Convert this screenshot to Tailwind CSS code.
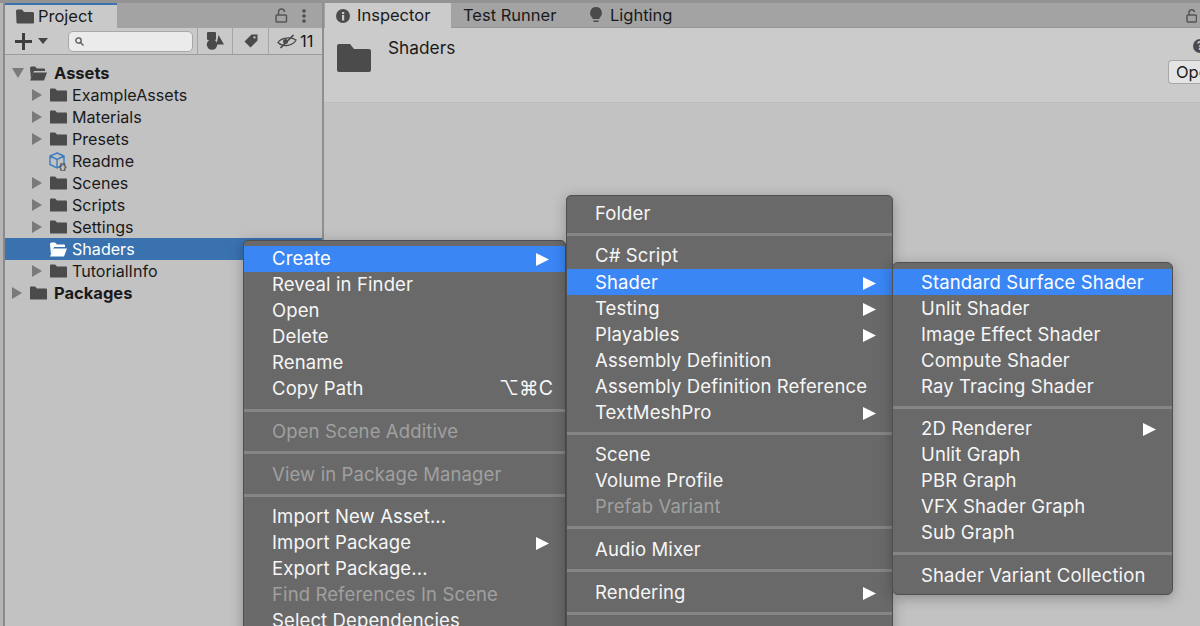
<!DOCTYPE html>
<html>
<head>
<meta charset="utf-8">
<script src="https://cdn.jsdelivr.net/npm/@tailwindcss/browser@4"></script>
</head>
<body class="m-0">
<div class="relative w-[1200px] h-[626px] overflow-hidden flex bg-[#939393] pt-[3px] font-['Inter','Liberation_Sans',sans-serif] text-[16.1px] text-[#1a1a1a]">

  <div class="w-[3px] shrink-0 bg-[#b4b4b4]"></div>
  <div class="w-[2px] shrink-0 bg-[#8a8a8a]"></div>

  <!-- Project panel -->
  <div class="w-[319px] shrink-0 flex flex-col">
    <div class="flex flex-col h-full border-r-2 border-[#8f8f8f] bg-[#c2c2c2]">
      <div class="h-[25px] flex bg-[#a3a3a3]">
        <div class="w-[112px] border-t-2 border-[#3a72b0] bg-[#c9c9c9] flex items-center pl-[11px] gap-[4px]">
          <svg class="w-[18px] h-[15px]" viewBox="0 0 18 15"><path d="M0 2a1.5 1.5 0 0 1 1.5-1.5h4.500l2 2.500h8.500a1.500 1.500 0 0 1 1.500 1.500v9a1 1 0 0 1-1 1h-15.500a1 1 0 0 1-1-1z" fill="#4b4b4b"/></svg>
          <span class="text-[16.5px] leading-none">Project</span>
        </div>
        <div class="flex-1 flex items-center justify-end gap-[14px] pr-[16px]">
          <svg class="w-[13px] h-[15px]" viewBox="0 0 13 15" fill="none" stroke="#555" stroke-width="1.500"><rect x="1" y="7" width="10.500" height="7" rx="1"/><path d="M3.500 7V4a3 3 0 0 1 6 0"/></svg>
          <svg class="w-[4px] h-[14px]" viewBox="0 0 4 14" fill="#4d4d4d"><circle cx="2" cy="2" r="1.800"/><circle cx="2" cy="7" r="1.800"/><circle cx="2" cy="12" r="1.800"/></svg>
        </div>
      </div>
      <div class="h-[27px] flex items-center bg-[#c9c9c9] border-b border-[#9a9a9a]">
        <svg class="ml-[10px] w-[17px] h-[17px]" viewBox="0 0 17 17" fill="#3d3d3d"><rect x="7" y="0" width="3" height="17"/><rect x="0" y="7" width="17" height="3"/></svg>
        <svg class="ml-[6px] w-[10px] h-[6px]" viewBox="0 0 10 6" fill="#444"><polygon points="0,0 10,0 5,6"/></svg>
        <div class="ml-[20px] w-[125px] h-[21px] rounded-[5px] bg-[#ebebeb] border border-[#a8a8a8] flex items-center pl-[6px]">
          <svg class="w-[9px] h-[9px]" viewBox="0 0 9 9" fill="none" stroke="#555" stroke-width="1.300"><circle cx="3.500" cy="3.500" r="2.700"/><path d="M5.500 5.500L8.500 8.500"/></svg>
        </div>
        <div class="ml-[4px] w-[35px] h-full border-l border-[#a5a5a5] flex items-center justify-center">
          <svg class="w-[18px] h-[18px]" viewBox="0 0 18 18" fill="#4a4a4a"><rect x="1" y="0" width="9" height="8" rx="1"/><circle cx="6" cy="12.500" r="5.200"/><polygon points="12.500,3 18,12.500 10.500,12.500"/></svg>
        </div>
        <div class="w-[36px] h-full border-l border-[#a5a5a5] flex items-center justify-center">
          <svg class="w-[14px] h-[14px]" viewBox="0 0 14 14" fill="#4a4a4a"><path d="M7.500 0.500h6v6l-7 7-6-6zM10.500 2.300a1.100 1.100 0 1 0 .01 0z" fill-rule="evenodd"/></svg>
        </div>
        <div class="w-[49px] h-full border-l border-[#a5a5a5] flex items-center pl-[8px] gap-[3px]">
          <svg class="w-[20px] h-[15px]" viewBox="0 0 20 15" fill="none" stroke="#4a4a4a" stroke-width="1.300"><path d="M1 8.500c3-5 13-6 18-2.500-3 6-13 7.500-18 2.500z"/><path d="M3.500 14L16.500 1" stroke-width="1.700"/><circle cx="8.500" cy="7.500" r="2.500" fill="#4a4a4a" stroke="none"/></svg>
          <span class="text-[16.5px] leading-none">11</span>
        </div>
      </div>
      <div class="flex-1 pt-[7px] flex flex-col">
        <div class="h-[22px] flex items-center pl-[7px]">
          <svg class="w-[12px] h-[10px]" viewBox="0 0 12 10" fill="#7a7a7a"><polygon points="0,0 12,0 6,10"/></svg>
          <svg class="ml-[6px] w-[17px] h-[15px]" viewBox="0 0 17 15"><path d="M0 2a1.500 1.500 0 0 1 1.500-1.500h3.500l2 2h7a1 1 0 0 1 1 1v1.500h-11l-3 8z" fill="#4b4b4b"/><path d="M3.500 6.500h13.500l-3 8h-14z" fill="#4b4b4b"/></svg>
          <span class="ml-[7px] font-bold text-[16.5px]">Assets</span>
        </div>
        <div class="h-[22px] flex items-center pl-[27px]">
          <svg class="w-[10px] h-[12px]" viewBox="0 0 10 12" fill="#7a7a7a"><polygon points="0,0 10,6 0,12"/></svg>
          <svg class="ml-[8px] w-[17px] h-[14px]" viewBox="0 0 17 14" fill="#4b4b4b"><path d="M0 1.500a1 1 0 0 1 1-1h4l2 2h9a1 1 0 0 1 1 1v9.500a.5.5 0 0 1-.5.5h-16a.5.5 0 0 1-.5-.5z"/></svg>
          <span class="ml-[5px]">ExampleAssets</span>
        </div>
        <div class="h-[22px] flex items-center pl-[27px]">
          <svg class="w-[10px] h-[12px]" viewBox="0 0 10 12" fill="#7a7a7a"><polygon points="0,0 10,6 0,12"/></svg>
          <svg class="ml-[8px] w-[17px] h-[14px]" viewBox="0 0 17 14" fill="#4b4b4b"><path d="M0 1.500a1 1 0 0 1 1-1h4l2 2h9a1 1 0 0 1 1 1v9.500a.5.5 0 0 1-.5.5h-16a.5.5 0 0 1-.5-.5z"/></svg>
          <span class="ml-[5px]">Materials</span>
        </div>
        <div class="h-[22px] flex items-center pl-[27px]">
          <svg class="w-[10px] h-[12px]" viewBox="0 0 10 12" fill="#7a7a7a"><polygon points="0,0 10,6 0,12"/></svg>
          <svg class="ml-[8px] w-[17px] h-[14px]" viewBox="0 0 17 14" fill="#4b4b4b"><path d="M0 1.500a1 1 0 0 1 1-1h4l2 2h9a1 1 0 0 1 1 1v9.500a.5.5 0 0 1-.5.5h-16a.5.5 0 0 1-.5-.5z"/></svg>
          <span class="ml-[5px]">Presets</span>
        </div>
        <div class="h-[22px] flex items-center pl-[44px]">
          <svg class="w-[20px] h-[19px]" viewBox="0 0 20 19" fill="none"><path d="M8 1l7 3v8l-7 4-7-3.500V4zM1 4l7 3.500L15 4M8 7.500V16" stroke="#3a7cc0" stroke-width="1.400"/><text x="9.500" y="18" font-size="9" font-family="Inter" font-weight="700" fill="#555">{}</text></svg>
          <span class="ml-[3px]">Readme</span>
        </div>
        <div class="h-[22px] flex items-center pl-[27px]">
          <svg class="w-[10px] h-[12px]" viewBox="0 0 10 12" fill="#7a7a7a"><polygon points="0,0 10,6 0,12"/></svg>
          <svg class="ml-[8px] w-[17px] h-[14px]" viewBox="0 0 17 14" fill="#4b4b4b"><path d="M0 1.500a1 1 0 0 1 1-1h4l2 2h9a1 1 0 0 1 1 1v9.500a.5.5 0 0 1-.5.5h-16a.5.5 0 0 1-.5-.5z"/></svg>
          <span class="ml-[5px]">Scenes</span>
        </div>
        <div class="h-[22px] flex items-center pl-[27px]">
          <svg class="w-[10px] h-[12px]" viewBox="0 0 10 12" fill="#7a7a7a"><polygon points="0,0 10,6 0,12"/></svg>
          <svg class="ml-[8px] w-[17px] h-[14px]" viewBox="0 0 17 14" fill="#4b4b4b"><path d="M0 1.500a1 1 0 0 1 1-1h4l2 2h9a1 1 0 0 1 1 1v9.500a.5.5 0 0 1-.5.5h-16a.5.5 0 0 1-.5-.5z"/></svg>
          <span class="ml-[5px]">Scripts</span>
        </div>
        <div class="h-[22px] flex items-center pl-[27px]">
          <svg class="w-[10px] h-[12px]" viewBox="0 0 10 12" fill="#7a7a7a"><polygon points="0,0 10,6 0,12"/></svg>
          <svg class="ml-[8px] w-[17px] h-[14px]" viewBox="0 0 17 14" fill="#4b4b4b"><path d="M0 1.500a1 1 0 0 1 1-1h4l2 2h9a1 1 0 0 1 1 1v9.500a.5.5 0 0 1-.5.5h-16a.5.5 0 0 1-.5-.5z"/></svg>
          <span class="ml-[5px]">Settings</span>
        </div>
        <div class="h-[22px] flex items-center pl-[45px] bg-[#3a72b0] text-white">
          <svg class="w-[17px] h-[15px]" viewBox="0 0 17 15"><path d="M0 2a1.500 1.500 0 0 1 1.500-1.500h3.500l2 2h7a1 1 0 0 1 1 1v1.500h-11l-3 8z" fill="#fff"/><path d="M3.500 6.500h13.500l-3 8h-14z" fill="#fff"/></svg>
          <span class="ml-[5px]">Shaders</span>
        </div>
        <div class="h-[22px] flex items-center pl-[27px]">
          <svg class="w-[10px] h-[12px]" viewBox="0 0 10 12" fill="#7a7a7a"><polygon points="0,0 10,6 0,12"/></svg>
          <svg class="ml-[8px] w-[17px] h-[14px]" viewBox="0 0 17 14" fill="#4b4b4b"><path d="M0 1.500a1 1 0 0 1 1-1h4l2 2h9a1 1 0 0 1 1 1v9.500a.5.5 0 0 1-.5.5h-16a.5.5 0 0 1-.5-.5z"/></svg>
          <span class="ml-[5px]">TutorialInfo</span>
        </div>
        <div class="h-[22px] flex items-center pl-[7px]">
          <svg class="w-[10px] h-[12px]" viewBox="0 0 10 12" fill="#7a7a7a"><polygon points="0,0 10,6 0,12"/></svg>
          <svg class="ml-[8px] w-[17px] h-[14px]" viewBox="0 0 17 14" fill="#4b4b4b"><path d="M0 1.500a1 1 0 0 1 1-1h4l2 2h9a1 1 0 0 1 1 1v9.500a.5.5 0 0 1-.5.5h-16a.5.5 0 0 1-.5-.5z"/></svg>
          <span class="ml-[7px] font-bold text-[16.5px]">Packages</span>
        </div>
      </div>
    </div>
  </div>

  <!-- Inspector panel -->
  <div class="flex-1 flex flex-col bg-[#c2c2c2] text-[16.5px]">
    <div class="h-[25px] flex items-stretch bg-[#a3a3a3] pl-[1px] border-b border-[#969696]">
      <div class="w-[126px] bg-[#cbcbcb] flex items-center pl-[11px] gap-[7px] -mb-[1px]">
        <svg class="w-[14px] h-[14px]" viewBox="0 0 14 14"><circle cx="7" cy="7" r="7" fill="#4b4b4b"/><rect x="6" y="6" width="2.200" height="5.500" fill="#cbcbcb"/><rect x="6" y="3" width="2.200" height="2" fill="#cbcbcb"/></svg>
        <span class="leading-none">Inspector</span>
      </div>
      <div class="w-[139px] flex items-center pl-[12px] leading-none">Test Runner</div>
      <div class="flex items-center gap-[8px]">
        <svg class="w-[12px] h-[17px]" viewBox="0 0 12 17" fill="#4b4b4b"><path d="M6 0a6 6 0 0 1 3.500 10.800V12h-7v-1.200A6 6 0 0 1 6 0z"/><rect x="3.500" y="13.500" width="5" height="1.500"/></svg>
        <span class="leading-none">Lighting</span>
      </div>
      <div class="flex-1 flex items-center justify-end pr-[3px]">
        <svg class="w-[11px] h-[15px]" viewBox="0 0 11 15" fill="none" stroke="#555" stroke-width="1.500"><rect x="1" y="7" width="9.500" height="7" rx="1"/><path d="M3 7V4a2.800 2.800 0 0 1 5.500 0"/></svg>
      </div>
    </div>
    <div class="h-[75px] bg-[#cbcbcb] border-b border-[#bcbcbc] flex pl-[13px]">
      <svg class="mt-[16px] w-[34px] h-[28px]" viewBox="0 0 34 28" fill="#4b4b4b"><path d="M0 2a2 2 0 0 1 2-2h11l4 5h15a2 2 0 0 1 2 2v19a2 2 0 0 1-2 2h-30a2 2 0 0 1-2-2z"/></svg>
      <span class="ml-[17px] mt-[10px] h-[20px] text-[17.3px] leading-[20px]">Shaders</span>
      <div class="flex-1 flex flex-col items-end overflow-hidden">
        <div class="mt-[11px] w-[7px] h-[14px] overflow-hidden">
          <div class="w-[14px] h-[14px] rounded-full bg-[#4b4b4b] text-[#cbcbcb] text-[12px] font-bold leading-[14px] text-center">?</div>
        </div>
        <div class="mt-[7px] w-[32px] h-[24px] rounded-l-[4px] bg-[#e4e4e4] border border-[#a8a8a8] border-r-0 pl-[7px] leading-[22px] overflow-hidden">Ope</div>
      </div>
    </div>
    <div class="flex-1"></div>
  </div>

  <!-- Context menu 1 -->
  <div class="absolute left-[243px] top-[240px] w-[323px] h-[400px] rounded-t-[5px] bg-[#696969] border border-[#505050] pt-[5px] text-[#f6f6f6] text-[18.5px] tracking-[0.12px] shadow-[0_3px_14px_rgba(0,0,0,0.28)]">
    <div class="h-[26px] flex items-center justify-between pl-[28px] pr-[16px] bg-[#3a86f5] text-white"><span>Create</span><svg class="w-[13px] h-[13px]" viewBox="0 0 13 13" fill="#fff"><polygon points="0,0 13,6.500 0,13"/></svg></div>
    <div class="h-[26px] flex items-center pl-[28px]">Reveal in Finder</div>
    <div class="h-[26px] flex items-center pl-[28px]">Open</div>
    <div class="h-[26px] flex items-center pl-[28px]">Delete</div>
    <div class="h-[26px] flex items-center pl-[28px]">Rename</div>
    <div class="h-[26px] flex items-center justify-between pl-[28px] pr-[12px]"><span>Copy Path</span><span class="text-[19.5px]">⌥⌘C</span></div>
    <div class="h-[16px] flex items-center"><div class="w-full h-[3px] bg-[#858585]"></div></div>
    <div class="h-[26px] pt-[2px] flex items-center pl-[28px] text-[#a0a0a0]">Open Scene Additive</div>
    <div class="h-[17px] flex items-center"><div class="w-full h-[3px] bg-[#858585]"></div></div>
    <div class="h-[26px] pt-[2px] flex items-center pl-[28px] text-[#a0a0a0]">View in Package Manager</div>
    <div class="h-[16px] flex items-center"><div class="w-full h-[3px] bg-[#858585]"></div></div>
    <div class="h-[26px] pt-[2px] flex items-center pl-[28px]">Import New Asset...</div>
    <div class="h-[26px] pt-[2px] flex items-center justify-between pl-[28px] pr-[16px]"><span>Import Package</span><svg class="w-[13px] h-[13px]" viewBox="0 0 13 13" fill="#fff"><polygon points="0,0 13,6.500 0,13"/></svg></div>
    <div class="h-[26px] pt-[2px] flex items-center pl-[28px]">Export Package...</div>
    <div class="h-[26px] pt-[2px] flex items-center pl-[28px] text-[#a0a0a0]">Find References In Scene</div>
    <div class="h-[26px] pt-[2px] flex items-center pl-[28px]">Select Dependencies</div>
  </div>

  <!-- Context menu 2 -->
  <div class="absolute left-[566px] top-[195px] w-[327px] h-[450px] rounded-t-[5px] bg-[#696969] border border-[#505050] pt-[4px] text-[#f6f6f6] text-[18.5px] tracking-[0.12px] shadow-[0_3px_14px_rgba(0,0,0,0.28)]">
    <div class="h-[26px] pt-[2px] flex items-center pl-[28px]">Folder</div>
    <div class="h-[16px] flex items-center"><div class="w-full h-[3px] bg-[#858585]"></div></div>
    <div class="h-[27px] flex items-center pl-[28px]">C# Script</div>
    <div class="h-[26px] pt-[2px] flex items-center justify-between pl-[28px] pr-[16px] bg-[#3a86f5] text-white"><span>Shader</span><svg class="w-[13px] h-[13px]" viewBox="0 0 13 13" fill="#fff"><polygon points="0,0 13,6.500 0,13"/></svg></div>
    <div class="h-[26px] pt-[2px] flex items-center justify-between pl-[28px] pr-[16px]"><span>Testing</span><svg class="w-[13px] h-[13px]" viewBox="0 0 13 13" fill="#fff"><polygon points="0,0 13,6.500 0,13"/></svg></div>
    <div class="h-[26px] pt-[2px] flex items-center justify-between pl-[28px] pr-[16px]"><span>Playables</span><svg class="w-[13px] h-[13px]" viewBox="0 0 13 13" fill="#fff"><polygon points="0,0 13,6.500 0,13"/></svg></div>
    <div class="h-[26px] pt-[2px] flex items-center pl-[28px]">Assembly Definition</div>
    <div class="h-[26px] pt-[2px] flex items-center pl-[28px]">Assembly Definition Reference</div>
    <div class="h-[26px] pt-[2px] flex items-center justify-between pl-[28px] pr-[16px]"><span>TextMeshPro</span><svg class="w-[13px] h-[13px]" viewBox="0 0 13 13" fill="#fff"><polygon points="0,0 13,6.500 0,13"/></svg></div>
    <div class="h-[16px] flex items-center"><div class="w-full h-[3px] bg-[#858585]"></div></div>
    <div class="h-[26px] pt-[2px] flex items-center pl-[28px]">Scene</div>
    <div class="h-[26px] pt-[2px] flex items-center pl-[28px]">Volume Profile</div>
    <div class="h-[26px] pt-[2px] flex items-center pl-[28px] text-[#a0a0a0]">Prefab Variant</div>
    <div class="h-[17px] flex items-center"><div class="w-full h-[3px] bg-[#858585]"></div></div>
    <div class="h-[26px] pt-[2px] flex items-center pl-[28px]">Audio Mixer</div>
    <div class="h-[17px] flex items-center"><div class="w-full h-[3px] bg-[#858585]"></div></div>
    <div class="h-[26px] pt-[2px] flex items-center justify-between pl-[28px] pr-[16px]"><span>Rendering</span><svg class="w-[13px] h-[13px]" viewBox="0 0 13 13" fill="#fff"><polygon points="0,0 13,6.500 0,13"/></svg></div>
    <div class="h-[16px] flex items-center"><div class="w-full h-[3px] bg-[#858585]"></div></div>
  </div>

  <!-- Context menu 3 -->
  <div class="absolute left-[892px] top-[262px] w-[281px] h-[333px] rounded-[6px] bg-[#696969] border border-[#505050] pt-[6px] text-[#f6f6f6] text-[18.5px] tracking-[0.12px] shadow-[0_3px_14px_rgba(0,0,0,0.28)]">
    <div class="h-[26px] pt-[2px] flex items-center pl-[28px] bg-[#3a86f5] text-white">Standard Surface Shader</div>
    <div class="h-[26px] pt-[2px] flex items-center pl-[28px]">Unlit Shader</div>
    <div class="h-[26px] pt-[2px] flex items-center pl-[28px]">Image Effect Shader</div>
    <div class="h-[26px] pt-[2px] flex items-center pl-[28px]">Compute Shader</div>
    <div class="h-[26px] pt-[2px] flex items-center pl-[28px]">Ray Tracing Shader</div>
    <div class="h-[16px] flex items-center"><div class="w-full h-[3px] bg-[#858585]"></div></div>
    <div class="h-[26px] pt-[2px] flex items-center justify-between pl-[28px] pr-[16px]"><span>2D Renderer</span><svg class="w-[13px] h-[13px]" viewBox="0 0 13 13" fill="#fff"><polygon points="0,0 13,6.500 0,13"/></svg></div>
    <div class="h-[26px] pt-[2px] flex items-center pl-[28px]">Unlit Graph</div>
    <div class="h-[26px] pt-[2px] flex items-center pl-[28px]">PBR Graph</div>
    <div class="h-[26px] pt-[2px] flex items-center pl-[28px]">VFX Shader Graph</div>
    <div class="h-[26px] pt-[2px] flex items-center pl-[28px]">Sub Graph</div>
    <div class="h-[17px] flex items-center"><div class="w-full h-[3px] bg-[#858585]"></div></div>
    <div class="h-[26px] pt-[2px] flex items-center pl-[28px]">Shader Variant Collection</div>
  </div>
</div>
</body>
</html>
